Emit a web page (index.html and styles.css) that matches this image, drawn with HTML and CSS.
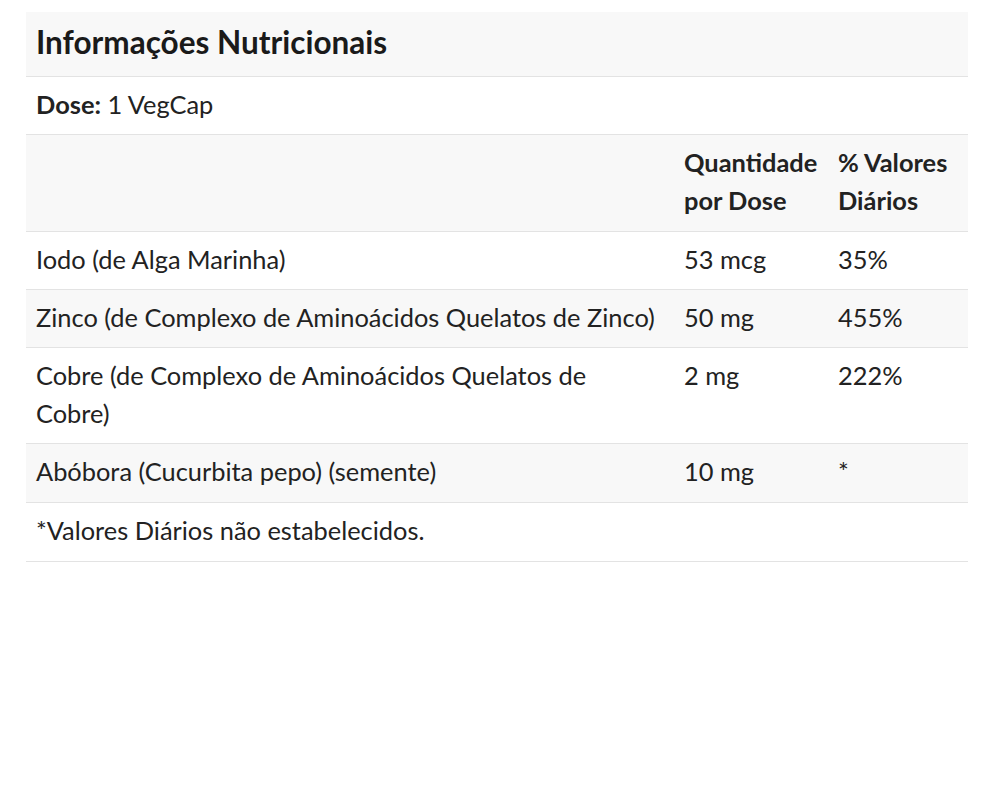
FILE: index.html
```
<!DOCTYPE html>
<html lang="pt">
<head>
<meta charset="utf-8">
<link rel="stylesheet" href="styles.css">
</head>
<body>
<div class="wrap">
<table class="facts">
<colgroup><col class="c1"><col class="c2"><col class="c3"></colgroup>
<thead>
<tr class="title-row"><th colspan="3" class="title">Informações Nutricionais</th></tr>
</thead>
<tbody>
<tr class="white"><td colspan="3"><strong>Dose:</strong> 1 VegCap</td></tr>
<tr class="gray head tall"><td></td><td class="bold">Quantidade por Dose</td><td class="bold">% Valores Diários</td></tr>
<tr class="white"><td class="name">Iodo (de Alga Marinha)</td><td>53 mcg</td><td>35%</td></tr>
<tr class="gray"><td class="name">Zinco (de Complexo de Aminoácidos Quelatos de Zinco)</td><td>50 mg</td><td>455%</td></tr>
<tr class="white"><td class="name">Cobre (de Complexo de Aminoácidos Quelatos de Cobre)</td><td>2 mg</td><td>222%</td></tr>
<tr class="gray tall"><td class="name">Abóbora (Cucurbita pepo) (semente)</td><td>10 mg</td><td>*</td></tr>
<tr class="white tall"><td colspan="3">*Valores Diários não estabelecidos.</td></tr>
</tbody>
</table>
</div>
</body>
</html>
```
FILE: styles.css
```
html, body {
  margin: 0;
  padding: 0;
  background: #fff;
}
body {
  font-family: Lato, "Open Sans", sans-serif;
  color: #222;
}
.wrap {
  padding: 12px 31px 0 26px;
}
.facts {
  width: 942px;
  border-collapse: collapse;
  table-layout: fixed;
  font-size: 25.4px;
  line-height: 38px;
}
.c1 { width: 648px; }
.c2 { width: 154px; }
.c3 { width: 140px; }
.facts th, .facts td {
  padding: 8px 10px 11px;
  text-align: left;
  vertical-align: top;
  border-bottom: 1px solid #e3e3e3;
}
.facts td.name {
  padding-right: 16px;
}
.facts .tall td {
  padding-bottom: 12px;
}
.facts .title {
  background: #f8f8f8;
  color: #1a1a1a;
  font-size: 31.5px;
  line-height: 40px;
  font-weight: 700;
  padding: 10px 10px 14px;
}
.gray td { background: #f8f8f8; }
.white td { background: #fff; }
.bold { font-weight: 700; }
strong { font-weight: 700; }
```
